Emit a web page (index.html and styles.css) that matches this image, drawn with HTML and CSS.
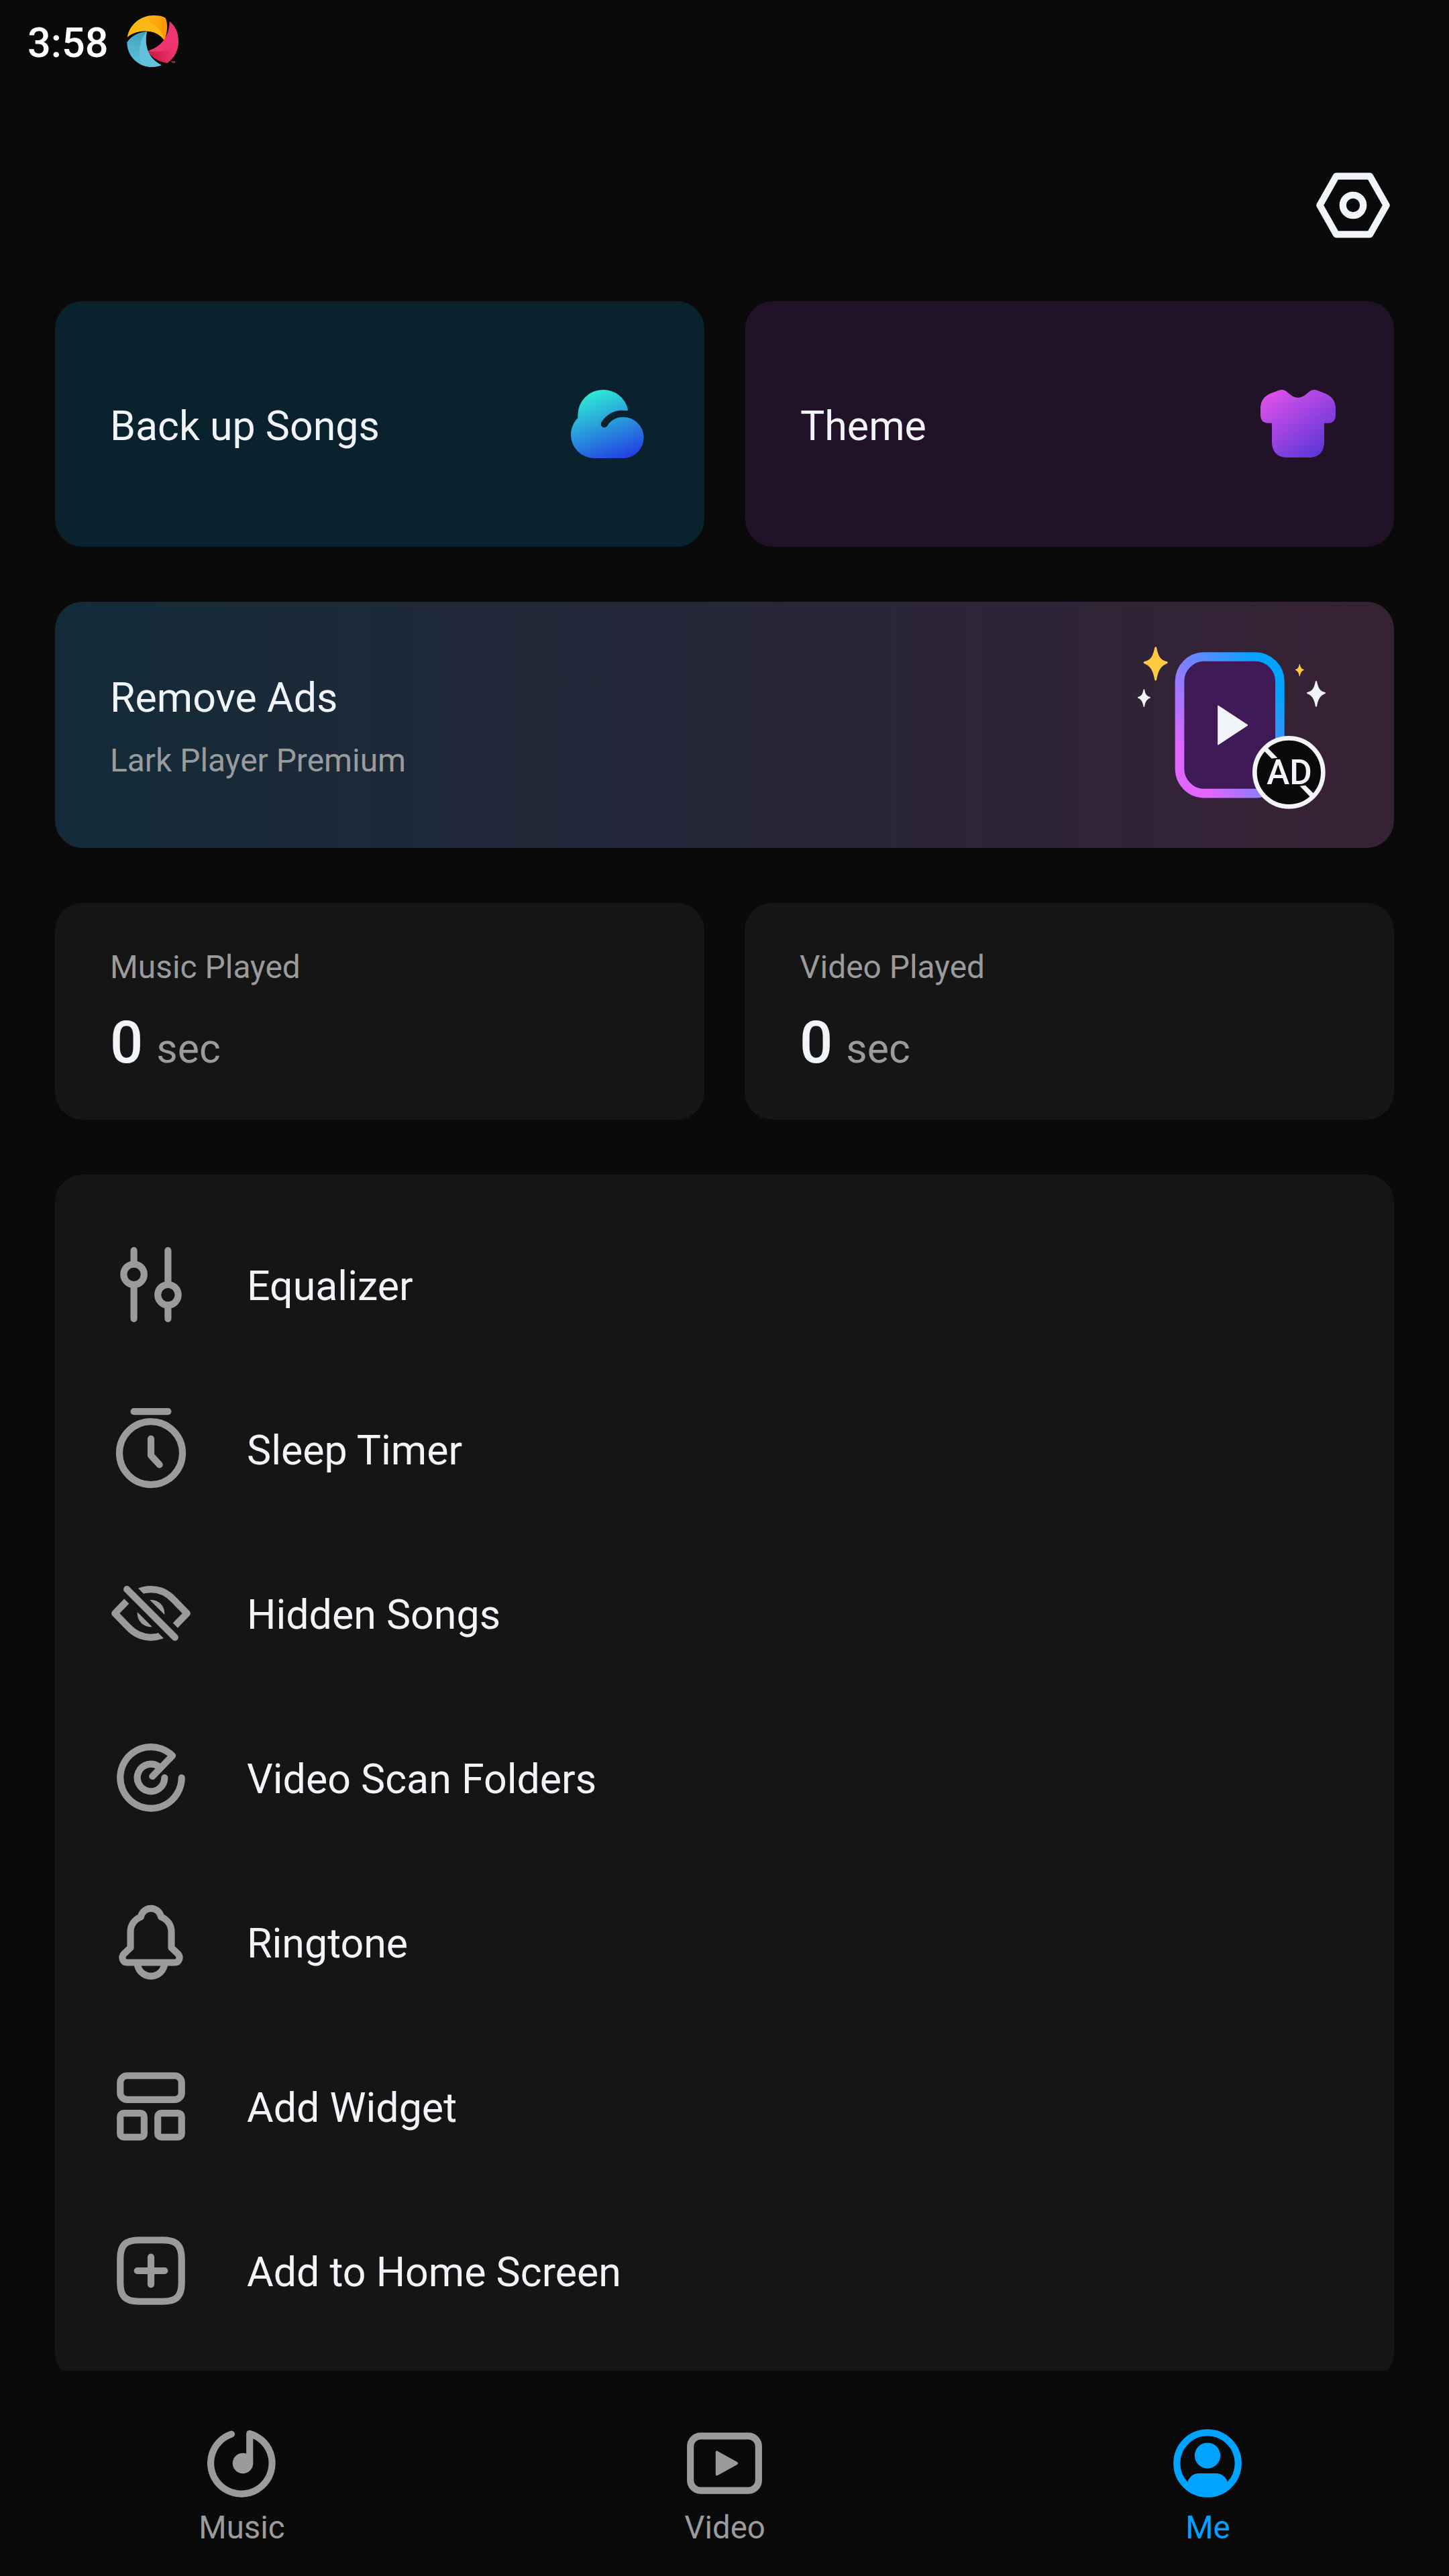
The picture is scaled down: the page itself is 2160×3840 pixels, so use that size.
FILE: index.html
```html
<!DOCTYPE html>
<html lang="en">
<head>
<meta charset="utf-8">
<title>Lark Player</title>
<link rel="stylesheet" href="styles.css">
</head>
<body>
<div class="screen">
  <header class="status">
    <span class="clock">3:58</span>
    <svg class="app-badge" viewBox="567 66 234 234">
      <defs>
        <linearGradient id="sun" gradientUnits="userSpaceOnUse" x1="650" y1="100" x2="745" y2="110"><stop offset="0" stop-color="#fdb515"/><stop offset="1" stop-color="#fc9603"/></linearGradient>
        <linearGradient id="sea" gradientUnits="userSpaceOnUse" x1="640" y1="150" x2="590" y2="270"><stop offset="0" stop-color="#3fa3bd"/><stop offset="1" stop-color="#5cbdd8"/></linearGradient>
        <linearGradient id="rose" gradientUnits="userSpaceOnUse" x1="680" y1="250" x2="770" y2="225"><stop offset="0" stop-color="#cb1d45"/><stop offset="1" stop-color="#ec336c"/></linearGradient>
      </defs>
      <path fill="url(#sun)" d="M570 165C580 110 630 69 684 69C705 68 725 71 740 80C751 100 750 150 735 181C715 150 680 138 645 139C610 141 590 150 570 165Z"/>
      <path fill="#fcb913" d="M570 165C577 128 598 102 624 90C680 95 722 125 735 181C715 150 680 138 645 139C610 141 590 150 570 165Z"/>
      <path fill="#ee3570" d="M758 95C788 120 798 150 798 185C797 225 780 260 748 281C712 277 680 258 659 228C705 214 757 180 758 95Z"/>
      <path fill="url(#rose)" d="M659 228C710 238 768 224 798 190C796 228 780 260 748 281C712 277 680 258 659 228Z"/>
      <path fill="url(#sea)" d="M568 190C585 162 615 145 657 141C645 180 650 255 722 291C700 300 685 300 670 299C610 295 568 245 568 190Z"/>
      <path fill="#62c1db" d="M657 141C622 175 616 240 630 289C655 301 690 303 722 291C660 262 645 200 657 141Z"/>
      <text class="trademark" x="766" y="281">TM</text>
    </svg>
  </header>

  <div class="toolbar">
    <svg class="icon settings" viewBox="0 0 24 24"><path d="M7.05 3.48H16.95L21.77 12L16.95 20.52H7.05L2.23 12Z"/><circle cx="12" cy="12" r="3"/></svg>
  </div>

  <main class="content">
    <section class="shortcuts">
      <div class="tile backup">
        <span class="title">Back up Songs</span>
        <svg class="icon-art" viewBox="138 93 366 366">
          <defs><linearGradient id="cloud" gradientUnits="userSpaceOnUse" x1="245" y1="135" x2="365" y2="455"><stop offset="0" stop-color="#2ee8d5"/><stop offset=".5" stop-color="#2893dd"/><stop offset="1" stop-color="#2438e4"/></linearGradient></defs>
          <path fill="url(#cloud)" d="M184 249V236A113 113 0 0 1 297 123A113 113 0 0 1 408 210Q409 218 401 217C352 209 312 232 289 269A15 15 0 0 0 316 284C331 259 355 245 387 245A92 92 0 0 1 387 429H257A104 104 0 0 1 153 325C153 296 165 268 184 249Z"/>
        </svg>
      </div>
      <div class="tile theme">
        <span class="title">Theme</span>
        <svg class="icon-art" viewBox="222 93 366 366">
          <defs><linearGradient id="shirt" gradientUnits="userSpaceOnUse" x1="260" y1="150" x2="470" y2="430"><stop offset="0" stop-color="#de50ea"/><stop offset="1" stop-color="#5e37d9"/></linearGradient></defs>
          <path fill="url(#shirt)" d="M278 141L318 126Q340 118 354 131L372 146Q404 170 437 146L455 131Q470 118 493 126L530 141Q571 160 573 203V240Q571 270 543 272H522V362Q518 420 462 426H348Q292 420 288 362V272H268Q239 270 237 240V203Q239 160 278 141Z"/>
        </svg>
      </div>
    </section>

    <section class="promo">
      <div class="promo-text">
        <div class="title">Remove Ads</div>
        <div class="caption">Lark Player Premium</div>
      </div>
      <svg class="promo-art" viewBox="0 0 1080 900">
        <defs>
          <linearGradient id="frame" gradientUnits="userSpaceOnUse" x1="295" y1="560" x2="725" y2="270"><stop offset="0" stop-color="#e066ff"/><stop offset="1" stop-color="#00a3ff"/></linearGradient>
          <path id="spark" d="M-4 -73Q0 -78 4 -73C12 -32 22 -16 52 -9Q57 -5 52 -1C24 10 12 28 4 73Q0 78 -4 73C-12 28 -24 10 -52 -1Q-57 -5 -52 -9C-22 -16 -12 -32 -4 -73Z"/>
        </defs>
        <use href="#spark" fill="#ffc942" transform="translate(188 178)"/>
        <use href="#spark" fill="#ffc942" transform="translate(832 207) scale(.36)"/>
        <use href="#spark" fill="#f1f5f9" transform="translate(906 313) scale(.77)"/>
        <use href="#spark" fill="#f1f5f9" transform="translate(136 332) scale(.53)"/>
        <rect x="295.5" y="147" width="448" height="611" rx="110" fill="#401a57" stroke="url(#frame)" stroke-width="41"/>
        <path d="M468 367L598 453L468 539Z" fill="#f1f5f9" stroke="#f1f5f9" stroke-width="5" stroke-linejoin="round"/>
        <circle cx="784" cy="664" r="153" fill="#0a0a0a" stroke="#f1f5f9" stroke-width="20"/>
        <path d="M675 570L689 554L733 599L707 602ZM833 725L858 722L895 759L880 775Z" fill="#f1f5f9"/>
        <text class="ad" x="786" y="718">AD</text>
      </svg>
    </section>

    <section class="stats">
      <div class="stat">
        <div class="caption">Music Played</div>
        <div class="amount"><span class="value">0</span><span class="unit">sec</span></div>
      </div>
      <div class="stat">
        <div class="caption">Video Played</div>
        <div class="amount"><span class="value">0</span><span class="unit">sec</span></div>
      </div>
    </section>

    <ul class="menu">
      <li class="item">
        <svg class="icon" viewBox="0 0 24 24"><path d="M7 2V6M7 12V22M17 2V12M17 18V22"/><circle cx="7" cy="9" r="3"/><circle cx="17" cy="15" r="3"/></svg>
        <span class="title">Equalizer</span>
      </li>
      <li class="item">
        <svg class="icon" viewBox="0 0 24 24"><path d="M7 1H17M12 9V13.9L14.5 16.6"/><circle cx="12" cy="13.2" r="9.25"/></svg>
        <span class="title">Sleep Timer</span>
      </li>
      <li class="item">
        <svg class="icon" viewBox="0 0 24 24">
          <defs><mask id="slit" maskUnits="userSpaceOnUse" x="0" y="0" width="24" height="24"><rect width="24" height="24" fill="#fff" stroke="none"/><path d="M0 0L24 24" stroke="#000" stroke-width="5.1"/></mask></defs>
          <g mask="url(#slit)">
            <path d="M1.42 12L5.4 7.9C7.3 5.9 9.6 4.95 12 4.95S16.7 5.9 18.6 7.9L22.58 12L18.6 16.1C16.7 18.1 14.4 19.05 12 19.05S7.3 18.1 5.4 16.1Z"/>
            <circle class="solid" cx="12" cy="12" r="4"/>
          </g>
          <path d="M4.95 4.95L19.05 19.05"/>
        </svg>
        <span class="title">Hidden Songs</span>
      </li>
      <li class="item">
        <svg class="icon" viewBox="0 0 24 24"><path d="M21 12A9 9 0 1 1 18.3 5.55L12.45 11.6M16 12A4 4 0 1 1 14.4 8.8"/></svg>
        <span class="title">Video Scan Folders</span>
      </li>
      <li class="item">
        <svg class="icon" viewBox="0 0 24 24"><path d="M9.05 4.6A3 3 0 0 1 14.95 4.6C16.8 5.4 18 7 18 9V13.65L19.85 15.4C20.9 16.5 20.2 18 19 18H5C3.8 18 3.1 16.5 4.15 15.4L6 13.65V9C6 7 7.2 5.4 9.05 4.6ZM8 18A4 4 0 0 0 16 18"/></svg>
        <span class="title">Ringtone</span>
      </li>
      <li class="item">
        <svg class="icon" viewBox="0 0 24 24"><rect x="3" y="3" width="18" height="7" rx="2"/><rect x="3" y="14" width="7" height="7" rx="1"/><rect x="14" y="14" width="7" height="7" rx="1"/></svg>
        <span class="title">Add Widget</span>
      </li>
      <li class="item">
        <svg class="icon" viewBox="0 0 24 24"><path d="M8.5 3H15.5C19.5 3 21 4.5 21 8.5V15.5C21 19.5 19.5 21 15.5 21H8.5C4.5 21 3 19.5 3 15.5V8.5C3 4.5 4.5 3 8.5 3ZM12 8V16M8 12H16"/></svg>
        <span class="title">Add to Home Screen</span>
      </li>
    </ul>
  </main>

  <nav class="tabs">
    <div class="tab">
      <svg class="icon" viewBox="0 0 24 24"><path d="M9.05 3.45A9 9 0 1 0 14.4 3.3V12"/><circle class="solid" cx="12.4" cy="12" r="3"/></svg>
      <span class="tab-label">Music</span>
    </div>
    <div class="tab">
      <svg class="icon" viewBox="0 0 24 24"><rect x="2" y="4" width="20" height="16" rx="3"/><path class="solid" d="M9.4 8.7Q9.5 8 10.1 8.5L15.7 11.6Q16.2 12 15.7 12.4L10.1 15.5Q9.5 15.9 9.4 15.2Z"/></svg>
      <span class="tab-label">Video</span>
    </div>
    <div class="tab active">
      <svg class="icon" viewBox="0 0 24 24"><circle cx="12" cy="12" r="9"/><circle class="solid" cx="12" cy="9.75" r="3.77"/><path class="solid" d="M6.1 17.5C6.7 15.9 7.9 14.95 9.4 14.95H14.6C16.1 14.95 17.3 15.9 17.9 17.5Q15.5 21 12 21T6.1 17.5Z"/></svg>
      <span class="tab-label">Me</span>
    </div>
  </nav>
</div>
</body>
</html>
```

FILE: styles.css
```css
* {
  box-sizing: border-box;
}

body {
  margin: 0;
  background: #0a0a0a;
  color: #f1f5f9;
  font-family: Roboto, "Liberation Sans", sans-serif;
  font-size: 60.9px;
}

.screen {
  display: flex;
  flex-direction: column;
  width: 2160px;
  height: 3840px;
  overflow: hidden;
}

.status {
  display: flex;
  align-items: flex-start;
  height: 184px;
  padding: 22px 0 0 41px;
  color: #fff;
}

.clock {
  width: 148px;
  padding-top: 6px;
  font-size: 61.2px;
  line-height: 72px;
  font-weight: 500;
}

.app-badge {
  width: 78px;
  height: 78px;
}

.trademark {
  fill: #ee3570;
  font-size: 11px;
  font-weight: 700;
}

.toolbar {
  display: flex;
  justify-content: flex-end;
  height: 265px;
  padding: 61px 82px 0 0;
}

.icon {
  flex: none;
  width: 122px;
  height: 122px;
  fill: none;
  stroke: #9a9b9d;
  stroke-width: 2;
  stroke-linecap: round;
  stroke-linejoin: round;
}

.icon .solid {
  fill: #9a9b9d;
  stroke: none;
}

.settings {
  stroke: #f1f5f9;
}

.content {
  display: flex;
  flex: 1;
  flex-direction: column;
  gap: 82px;
  min-height: 0;
  padding: 0 82px;
  overflow: hidden;
}

.shortcuts {
  display: grid;
  flex: none;
  grid-template-columns: 968px 967px;
  gap: 61px;
}

.stats {
  display: grid;
  flex: none;
  grid-template-columns: 1fr 1fr;
  gap: 60px;
}

.tile {
  display: flex;
  align-items: center;
  justify-content: space-between;
  height: 366px;
  padding: 0 82px;
  border-radius: 41px;
}

.tile .title {
  padding-top: 6px;
}

.backup {
  background: #0a212e;
}

.theme {
  background: #211229;
}

.icon-art {
  width: 122px;
  height: 122px;
}

.promo {
  display: flex;
  flex: none;
  align-items: center;
  justify-content: space-between;
  height: 367px;
  padding: 0 58px 1px 82px;
  border-radius: 41px;
  background: linear-gradient(90deg, #132b38, #262739 50%, #382135);
}

.promo-text {
  display: flex;
  flex-direction: column;
  gap: 28px;
  padding-top: 7px;
}

.promo .title {
  line-height: 72px;
}

.caption {
  color: #9a9b9d;
  font-size: 47.9px;
  line-height: 58px;
}

.promo-art {
  width: 360px;
  height: 300px;
}

.ad {
  fill: #f1f5f9;
  font-size: 154px;
  font-weight: 500;
  text-anchor: middle;
}

.stat {
  height: 323px;
  padding: 67px 82px 0;
  border-radius: 41px;
  background: #151515;
}

.amount {
  display: flex;
  align-items: baseline;
  gap: 20px;
  margin-top: 32px;
  line-height: 104px;
}

.value {
  font-size: 86.7px;
  font-weight: 500;
}

.unit {
  color: #9a9b9d;
}

.menu {
  flex: none;
  margin: 0;
  padding: 41px 82px;
  border-radius: 41px;
  background: #151515;
  list-style: none;
}

.item {
  display: flex;
  align-items: flex-start;
  gap: 82px;
  height: 245px;
  padding-top: 62px;
}

.item .title {
  margin-top: 3px;
  line-height: 122px;
}

.tabs {
  display: grid;
  flex: none;
  grid-template-columns: repeat(3, 1fr);
  height: 306px;
  padding-top: 77px;
}

.tab {
  display: flex;
  flex-direction: column;
  align-items: center;
}

.tab-label {
  margin-top: 6px;
  padding-left: 1px;
  color: #9a9b9d;
  font-size: 47.4px;
  line-height: 58px;
}

.active .icon {
  stroke: #00a3ff;
}

.active .solid {
  fill: #00a3ff;
}

.active .tab-label {
  color: #00a3ff;
}
```
